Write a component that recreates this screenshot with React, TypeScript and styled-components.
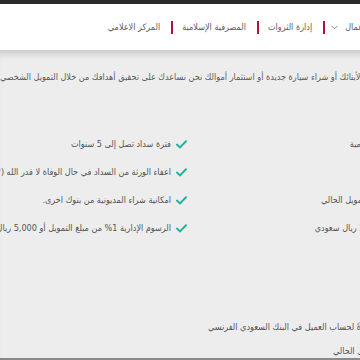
import React from 'react';
import styled, { createGlobalStyle } from 'styled-components';

const GlobalStyle = createGlobalStyle`
  html, body {
    margin: 0;
    padding: 0;
    overflow: hidden;
    background: #ededed;
  }
  body {
    width: 360px;
    height: 360px;
    font-family: "DejaVu Sans Condensed", "DejaVu Sans", sans-serif;
    font-stretch: condensed;
  }
`;

const Page = styled.div`
  direction: rtl;
  width: 520px;
  height: 360px;
  display: flex;
  flex-direction: column;
  background: #ededed;
`;

const TopStrip = styled.div`
  height: 4px;
  background: #2b2b2b;
`;

const NavBar = styled.nav`
  height: 46px;
  background: #fff;
  display: flex;
  align-items: center;
  padding-right: 121px;
`;

const NavItem = styled.span`
  display: flex;
  align-items: center;
  gap: 7px;
  font-size: 9px;
  color: #5c5c5c;
  white-space: nowrap;
`;

const Divider = styled.span<{ $near?: boolean }>`
  width: 2px;
  height: 13px;
  background: #b3123f;
  margin-left: 11px;
  margin-right: ${(p) => (p.$near ? 6 : 9)}px;
`;

const Body = styled.section`
  flex: 1;
  min-height: 0;
  overflow: hidden;
  box-shadow: inset 0 9px 8px -6px rgba(0, 0, 0, 0.18);
  padding-top: 20px;
  display: flex;
  flex-direction: column;
`;

const Intro = styled.div`
  flex: none;
  display: flex;
  justify-content: flex-end;
  font-size: 9px;
  color: #5c5c5c;
  white-space: nowrap;
  height: 14px;
  line-height: 14px;
`;

const Columns = styled.div`
  flex: none;
  display: grid;
  grid-template-columns: 330px 190px;
  margin-top: 53px;
`;

const List = styled.ul`
  list-style: none;
  margin: 0;
  padding: 0;
  display: flex;
  flex-direction: column;
  gap: 14px;
`;

const Item = styled.li<{ $indent: number }>`
  display: flex;
  align-items: center;
  gap: 5px;
  padding-right: ${(p) => p.$indent}px;
  height: 14px;
  font-size: 9px;
  color: #555;
  white-space: nowrap;
`;

const Check = styled.svg`
  flex: none;
  width: 11px;
  height: 9px;
`;

const Notes = styled.div`
  flex: none;
  margin-top: 85px;
  display: flex;
  flex-direction: column;
  gap: 10px;
`;

const Note = styled.div<{ $offset: number }>`
  display: flex;
  justify-content: flex-end;
  padding-left: ${(p) => p.$offset}px;
  font-size: 9px;
  color: #555;
  white-space: nowrap;
  height: 14px;
  line-height: 14px;
`;

const BottomEdge = styled.div`
  flex: none;
  height: 2px;
  background: #8a8a8a;
`;

const Chevron = () => (
  <svg width="7" height="5" viewBox="0 0 7 5">
    <path d="M0.5 0.8 L3.5 3.8 L6.5 0.8" fill="none" stroke="#888" strokeWidth="1" />
  </svg>
);

const Tick = () => (
  <Check viewBox="0 0 11 9">
    <path d="M1 4.6 L4 7.4 L10 1.2" fill="none" stroke="#22b3a1" strokeWidth="2" strokeLinecap="round" />
  </Check>
);

const rightFeatures = [
  'دون الحاجة لكفيل أو ضامن للجهات الحكومية',
  'أقساط شهرية ميسرة',
  'إمكانية الحصول على سيولة إضافية مع التمويل الحالي',
  'يبلغ الحد الأقصى للتمويل إلى 2,500,000 ريال سعودي',
];

const leftFeatures = [
  'فترة سداد تصل إلى 5 سنوات',
  'اعفاء الورثة من السداد في حال الوفاة لا قدر الله (**تطبق الشروط والأحكام)',
  'امكانية شراء المديونية من بنوك اخرى.',
  'الرسوم الإدارية 1% من مبلغ التمويل أو 5,000 ريال سعودي',
];

export default function App() {
  return (
    <>
      <GlobalStyle />
      <Page>
        <TopStrip />
        <NavBar>
          <NavItem>
            مصرفية الأعمال
            <Chevron />
          </NavItem>
          <Divider $near />
          <NavItem>إدارة الثروات</NavItem>
          <Divider />
          <NavItem>المصرفية الإسلامية</NavItem>
          <Divider />
          <NavItem>المركز الاعلامي</NavItem>
        </NavBar>
        <Body>
          <Intro>
            سواء كنت تخطط لتوفير التعليم لأبنائك أو شراء سيارة جديدة أو استثمار أموالك نحن نساعدك على تحقيق أهدافك من خلال التمويل الشخصي
          </Intro>
          <Columns>
            <List>
              {rightFeatures.map((f) => (
                <Item key={f} $indent={4}>
                  <Tick />
                  {f}
                </Item>
              ))}
            </List>
            <List>
              {leftFeatures.map((f) => (
                <Item key={f} $indent={3}>
                  <Tick />
                  {f}
                </Item>
              ))}
            </List>
          </Columns>
          <Notes>
            <Note $offset={208}>
              يتم إيداع مبلغ التمويل مباشرةً لحساب العميل في البنك السعودي الفرنسي
            </Note>
            <Note $offset={333}>سداد التمويل الحالي</Note>
          </Notes>
        </Body>
        <BottomEdge />
      </Page>
    </>
  );
}
